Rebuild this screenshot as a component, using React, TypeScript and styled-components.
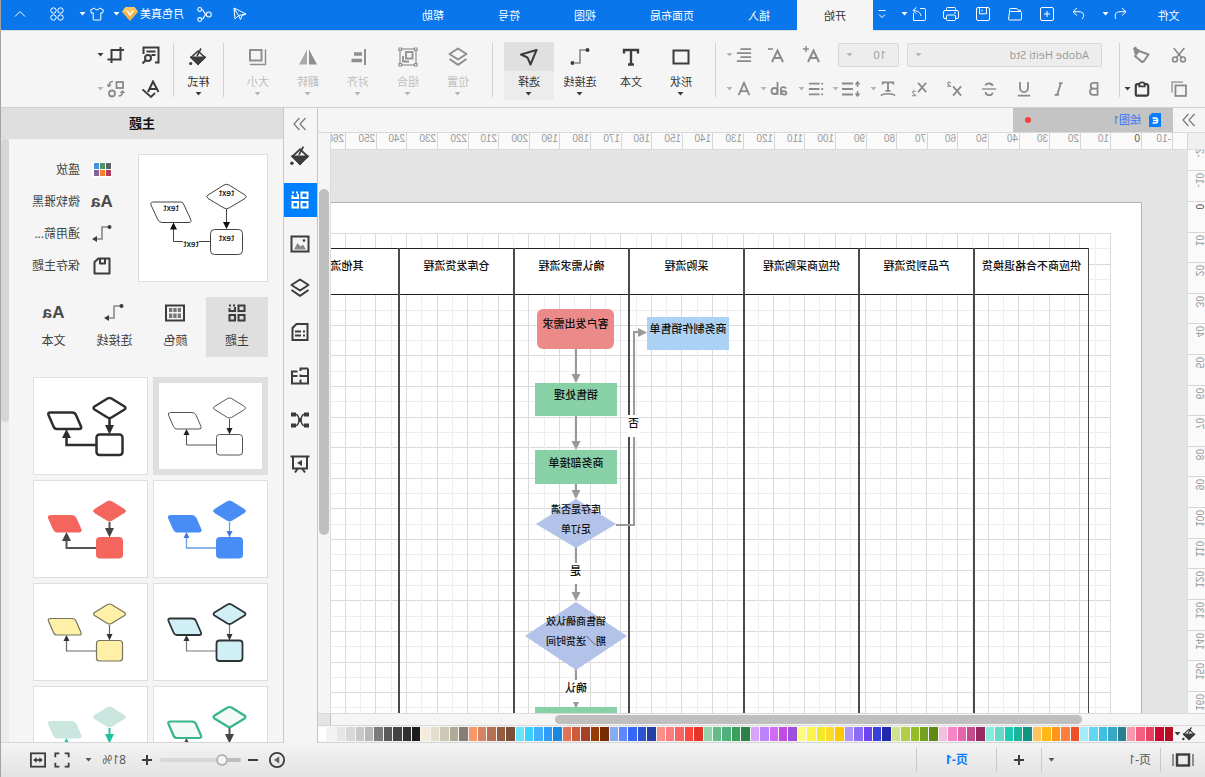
import React from "react";
import styled, { createGlobalStyle, css } from "styled-components";

const GlobalStyle = createGlobalStyle`
  *, *::before, *::after { box-sizing: border-box; }
  body { margin: 0; background: #f5f5f5; overflow: hidden; }
  button, input, select { font: inherit; color: inherit; margin: 0; }
  svg { display: block; flex: none; }
`;

/* The whole window is shown as seen in a mirror. */
const Window = styled.div`
  display: flex;
  flex-direction: column;
  height: 100vh;
  border-right: 1px solid #a4a4a4;
  transform: scaleX(-1);
  font-family: "Open Sans", "Noto Sans CJK SC", sans-serif;
  font-size: 11px;
  line-height: 16px;
  color: #333;
  background: #f5f5f5;
`;

const plainButton = css`
  display: flex;
  align-items: center;
  border: 0;
  padding: 0;
  background: none;
  cursor: pointer;
  white-space: nowrap;
`;

const Spacer = styled.div`
  flex: 1;
`;

/* ---------- icons ---------- */

interface IconProps {
  size?: number;
  box?: number;
  stroke?: number;
  children: React.ReactNode;
}

const Icon = ({ size = 16, box = 18, stroke = 2, children }: IconProps) => (
  <svg
    width={size}
    height={size}
    viewBox={`0 0 ${box} ${box}`}
    fill="none"
    stroke="currentColor"
    strokeWidth={stroke}
    aria-hidden="true"
  >
    {children}
  </svg>
);

const Caret = ({ soft }: { soft?: boolean }) => (
  <svg width="7" height="4" viewBox="0 0 7 4" fill={soft ? "#b4b4b4" : "currentColor"} aria-hidden="true">
    <path d="M0.5 0h6L3.5 3.6z" />
  </svg>
);

const thin = (children: React.ReactNode, size = 14) => (
  <Icon size={size} box={14} stroke={1}>
    {children}
  </Icon>
);

const undoIcon = thin(<path d="M5 1L1 4.7L5 8.5M1 4.7H7C11.5 4.7 13 8 11 12" />);
const redoIcon = thin(<path d="M9 1L13 4.7L9 8.5M13 4.7H7C2 4.7 1 9 4 12" />);
const newIcon = thin(
  <>
    <rect x="0.5" y="0.5" width="13" height="13" rx="1.5" />
    <path d="M7 4v6M4 7h6" />
  </>
);
const openIcon = thin(
  <>
    <path d="M0.5 12V5.5a1 1 0 0 1 1-1h10a1 1 0 0 1 1 1L13.5 12a1 1 0 0 1-1 1H1.5a1 1 0 0 1-1-1z" />
    <path d="M1.5 4.5V3.2h2.4L5.2 1.5h6.3a1 1 0 0 1 1 1V5" />
  </>
);
const saveIcon = thin(
  <>
    <rect x="0.5" y="0.5" width="13" height="13" rx="1.5" />
    <path d="M3.5 0.5v6.3h7V0.5M8 2.5v2" />
  </>
);
const printIcon = (
  <svg width="16" height="14" viewBox="0 0 16 14" fill="none" stroke="currentColor" aria-hidden="true">
    <rect x="3.5" y="0.5" width="9" height="3" rx="1" />
    <rect x="0.5" y="3.5" width="15" height="8" rx="1.5" />
    <rect x="3.5" y="8" width="9" height="5.5" rx="1" fill="#0977eb" />
    <path d="M3 5.8h2" />
  </svg>
);
const exportIcon = thin(<path d="M6 1.5H1.5a1 1 0 0 0-1 1V12.5a1 1 0 0 0 1 1H12.5V6M5 9C5.5 5.5 8 4 12.5 3.5M9.5 0.5L13 3.5L10 6.5" />);
const customizeIcon = thin(<path d="M3.5 3.5h7M4 7.5l3 3l3-3" />);
const sendIcon = thin(<path d="M13 1L12 12L8.5 8.5L1 7L13 1M13 1L8.5 8.5M1 7L5 8.5L6.5 12.5L8.5 8.5" />);
const shareIcon = thin(
  <>
    <circle cx="3" cy="7" r="2.3" />
    <circle cx="11.5" cy="2.3" r="1.8" />
    <circle cx="11.5" cy="11.7" r="1.8" />
    <path d="M5.3 7C8 7 7 2.3 9.7 2.3M5.3 7C8 7 7 11.7 9.7 11.7" />
  </>,
  15
);
const shirtIcon = thin(<path d="M4.5 1L0.5 3L1.5 6.2L3.2 5.8V12.5a0.5 0.5 0 0 0 0.5 0.5H10.3a0.5 0.5 0 0 0 0.5-0.5V5.8L12.5 6.2L13.5 3L9.5 1C9 3.3 5 3.3 4.5 1z" />);
const appsIcon = thin(
  <>
    <circle cx="3.5" cy="3.5" r="2.7" />
    <circle cx="10.5" cy="3.5" r="2.7" />
    <circle cx="3.5" cy="10.5" r="2.7" />
    <circle cx="10.5" cy="10.5" r="2.7" />
  </>
);
const upIcon = thin(<path d="M2 9.5L7 4.5L12 9.5" />);
const vipIcon = (
  <svg width="16" height="14" viewBox="0 0 16 14" aria-hidden="true">
    <path d="M3.5 0h9L16 5L8 14L0 5z" fill="#f3b24a" />
    <path d="M3.5 0h9L16 5H0z" fill="#fbc766" />
    <path d="M5 4l3 4l3-4" fill="none" stroke="#fff" strokeWidth="1.6" />
  </svg>
);

const cutIcon = (
  <Icon stroke={1.8}>
    <circle cx="4.5" cy="14" r="2.7" />
    <circle cx="13.5" cy="14" r="2.7" />
    <path d="M3 1L12 12M15 1L6 12" />
  </Icon>
);
const brushIcon = (
  <Icon size={18}>
    <path d="M1.5 8.5L11 5L15 10L8 16L6 15z" strokeLinejoin="round" />
    <path d="M10 4L13 2.500L14 0.500L17 2L16 5L15.500 8L13 8z" fill="currentColor" stroke="none" />
  </Icon>
);
const copyIcon = (
  <Icon>
    <path d="M4.5 1.2H16.8V13" stroke="#aaa" />
    <rect x="1.2" y="5" width="11.8" height="11.8" />
  </Icon>
);
const pasteIcon = (
  <Icon stroke={2.4}>
    <rect x="2" y="3.5" width="14" height="13" rx="2" />
    <path d="M6 6V4a3 2.5 0 0 1 6 0v2z" fill="#f5f5f5" strokeWidth="2" />
  </Icon>
);
const fontLetter = (mark: React.ReactNode) => (
  <Icon size={18}>
    <path d="M2 16L7.5 4.5L13 16M4 12h7" />
    {mark}
  </Icon>
);
const biggerIcon = fontLetter(<path d="M12 3h6M15 0v6" strokeWidth="1.4" />);
const smallerIcon = fontLetter(<path d="M12 3h5" strokeWidth="1.6" />);
const alignIcon = (
  <Icon>
    <path d="M1 2.5h12M1 7h16M1 11.5h12M1 16h16" />
  </Icon>
);
const boldIcon = <Icon><path d="M5 2h4.5a3 3 0 0 1 0 6.5H5zM5 8.5h5a3.3 3.3 0 0 1 0 7H5z" /></Icon>;
const italicIcon = <Icon><path d="M5 2.5h4M9 15.5h5M7 2.5l4 13" /></Icon>;
const underlineIcon = <Icon><path d="M4.5 1v7a4.5 4.5 0 0 0 9 0V1M2 16.5h14" /></Icon>;
const strikeIcon = (
  <Icon>
    <path d="M1 9h16" strokeWidth="1.5" />
    <path d="M13 5C12 2 5.5 2 5 5.5M13 12.5C12.5 17 5.5 17 5 13" />
  </Icon>
);
const superIcon = (
  <Icon>
    <path d="M1 6l9 10.5M10 6L1 16.5" />
    <path d="M13 2.5C13 0.5 16.5 0.5 16 3L13 6h4" strokeWidth="1.2" />
  </Icon>
);
const subIcon = (
  <Icon>
    <path d="M1 2l9 10.5M10 2L1 12.5" />
    <path d="M13 12.5C13 10.5 16.5 10.5 16 13L13 16.5h4" strokeWidth="1.2" />
  </Icon>
);
const textArtIcon = (
  <Icon>
    <path d="M3 4V1.500h12V4M9 1.500V11M6 11h6" />
    <path d="M1 16.500C3 13.500 15 13.500 17 16.500" strokeWidth="1.6" />
  </Icon>
);
const spacingIcon = (
  <Icon size={18}>
    <path d="M7 3.5h11M7 9h11M7 14.5h11" />
    <path d="M2.5 2v5M2.5 11v5M0.5 4.5l2-2.5l2 2.5M0.5 13.5l2 2.5l2-2.5" strokeWidth="1.5" />
  </Icon>
);
const listIcon = (
  <Icon>
    <path d="M1 3h2M1 9h2M1 15h2M5 3h12M5 9h12M5 15h12" />
  </Icon>
);
const caseIcon = (
  <Icon size={18} stroke={1.800}>
    <path d="M2 8.500C3 6.500 7 6.500 7 9V15M7 11C3 11 1.500 11.500 1.500 13.200S6 15.500 7 12.500" />
    <path d="M10.500 2v13" />
    <circle cx="13.5" cy="11" r="3" />
  </Icon>
);
const colorIcon = <Icon><path d="M3 16L9 2L15 16M5 11.5h8" /></Icon>;

const rectIcon = <Icon size={18}><rect x="1.5" y="2.5" width="15" height="13" /></Icon>;
const textIcon = <Icon size={18} stroke={2.400}><path d="M2 5.500V2h14v3.500M9 2v14M6 16.500h6" /></Icon>;
const connectorIcon = (
  <Icon size={20} box={20}>
    <path d="M4 3h6v13h5" stroke="#888" strokeWidth="1.6" />
    <circle cx="2.5" cy="3" r="2" fill="currentColor" stroke="none" />
    <circle cx="17.5" cy="16" r="2" fill="currentColor" stroke="none" />
  </Icon>
);
const selectIcon = <Icon size={18}><path d="M1.5 2L17 6.5L10.5 9.5L7.5 16.5z" strokeLinejoin="round" /></Icon>;
const layersIcon = (
  <Icon size={20} box={20}>
    <path d="M10 1.5L18.5 7L10 12.5L1.5 7z" strokeLinejoin="round" />
    <path d="M1.5 12L10 17.8L18.5 12" strokeLinejoin="round" />
  </Icon>
);
const groupIcon = (
  <Icon size={20} box={20} stroke={1.2}>
    <rect x="2" y="2" width="16" height="16" />
    <path d="M1 1h2.5v2.5H1zM16.5 1H19v2.5h-2.5zM1 16.5h2.5V19H1zM16.5 16.5H19V19h-2.5z" fill="#f5f5f5" />
    <rect x="5.5" y="5" width="6.5" height="6.5" strokeWidth="1.8" />
    <path d="M9 14.5h6V9" strokeWidth="1.8" />
  </Icon>
);
const alignObjIcon = (
  <Icon size={18}>
    <path d="M2 1v16" />
    <path d="M5 6h8M5 12.5h10.5" strokeWidth="3.6" />
  </Icon>
);
const flipIcon = (
  <Icon size={18}>
    <path d="M8 1.5V16.5H0z" fill="currentColor" stroke="none" />
    <path d="M10 1.5V16.5H18z" fill="#aaa" stroke="none" />
  </Icon>
);
const sizeIcon = (
  <Icon size={18}>
    <rect x="5.5" y="2" width="11.5" height="10.5" />
    <path d="M1.5 1.5V16.5H17" strokeWidth="1.5" />
  </Icon>
);
const bucketIcon = (size = 18) => (
  <Icon size={size}>
    <path d="M9 3L16 9.5L9 16L2 9.5z" strokeWidth="1.6" />
    <path d="M3 9.5h12L9 16z" fill="currentColor" />
    <path d="M10 8L6 0.5" strokeWidth="1.6" />
    <circle cx="16.3" cy="15.5" r="1.6" fill="currentColor" stroke="none" />
  </Icon>
);
const findIcon = (
  <Icon size={18}>
    <path d="M5 16.5H1.5V1.5H16.5V8M4.5 5.5h9M4.5 9h4" />
    <circle cx="12" cy="12" r="3" />
    <path d="M14 14l3.5 3.5" />
  </Icon>
);
const cropIcon = (
  <Icon size={18}>
    <path d="M1 4H13.5V14M4.500 4V13.500H17.500M4.500 1V4M13.500 14V17" />
  </Icon>
);
const spellIcon = (
  <Icon size={18}>
    <path d="M1.5 12L7 1.5L12 12M3.5 9h7" />
    <path d="M5 13l4 4L17.5 9.5" strokeWidth="1.8" />
  </Icon>
);
const swapIcon = (
  <Icon size={18} stroke={1.8}>
    <rect x="2" y="2" width="6.5" height="6" />
    <circle cx="13" cy="13.5" r="3" />
    <path d="M12 1.5c3 0 4 1.5 4 4M14 4.5l2 2l2-2M6.5 16c-3 0-4-1.5-4-4M0.5 13l2-2l2 2" strokeWidth="1.4" />
  </Icon>
);
const themeIcon = (
  <Icon size={20} box={20} stroke={2}>
    <rect x="2.5" y="2.5" width="6" height="5.5" />
    <path d="M12 4V8H17.5V5M12 2.5h2M16 2.5h2" />
    <rect x="2.5" y="12" width="6" height="5.5" />
    <rect x="12" y="12" width="5.5" height="5.5" />
  </Icon>
);
const imageIcon = (
  <Icon size={20} box={20}>
    <rect x="1.5" y="2.5" width="17" height="15" />
    <path d="M4 15.5L7 10.5L9.5 12.5L12.5 9L16 15.5z" fill="#888" stroke="none" />
    <circle cx="6" cy="6.5" r="1.3" fill="currentColor" stroke="none" />
  </Icon>
);
const docIcon = (
  <Icon size={20} box={20}>
    <path d="M2.5 2H13.5L17.5 6V18H2.5z" />
    <path d="M5 9.5h2M9 9.500h6M5 13.500h2M9 13.500h6" />
  </Icon>
);
const planIcon = (
  <Icon size={20} box={20}>
    <path d="M2 2.5H9.5V5M9.5 8.5V10H2M2 2.5V17.5H18V5.5H12.5M12.5 10H18M9.5 17V13.5" />
  </Icon>
);
const networkIcon = (
  <Icon size={20} box={20} stroke={1.5}>
    <path d="M1 2.5h5v4H1zM14 2.5h5v4h-5zM1 13.5h5v4H1zM14 13.5h5v4h-5z" fill="currentColor" stroke="none" />
    <path d="M6 4.5C9 4.5 8 9 10 10S11 15.5 14 15.5M14 4.5C11 4.5 12 9 10 10S9 15.5 6 15.5" />
    <circle cx="10" cy="10" r="2" fill="currentColor" stroke="none" />
  </Icon>
);
const presentIcon = (
  <Icon size={20} box={20}>
    <path d="M0.5 2.5h19M3 3v11.5h14V3M7.5 15l-2.5 3.5M12.5 15l2.5 3.5" />
    <path d="M8 6l5 3l-5 3z" fill="currentColor" stroke="none" />
  </Icon>
);
const tableIcon = (
  <Icon size={20} box={20}>
    <rect x="1" y="2.5" width="18" height="15" />
    <path d="M4 5h3.3v4H4zM8.4 5h3.3v4H8.4zM12.7 5H16v4h-3.3zM4 10.5h3.3v4.5H4zM8.4 10.5h3.3v4.5H8.4zM12.7 10.5H16v4.5h-3.3z" fill="#777" stroke="none" />
  </Icon>
);
const arrowConnectorIcon = (
  <Icon size={20} box={20}>
    <path d="M4 3h6v12h5" stroke="#888" strokeWidth="1.6" />
    <circle cx="2.5" cy="3" r="2" fill="currentColor" stroke="none" />
    <path d="M15 12l5 3l-5 3z" fill="currentColor" stroke="none" />
  </Icon>
);
const diskIcon = (
  <Icon size={18}>
    <path d="M1.5 1.5H12.5L16.5 5V16.5H1.5zM6 2v4.5h5V2" strokeLinejoin="round" />
  </Icon>
);
const swatchIcon = (
  <svg width="20" height="16" viewBox="0 0 20 16" aria-hidden="true">
    <rect width="20" height="16" fill="#fff" />
    {["#5b6064", "#4f9560", "#4a90e2", "#b63a5c", "#f4802e", "#84629a"].map((fill, i) => (
      <rect key={fill} x={1 + (i % 3) * 6} y={1 + Math.floor(i / 3) * 7} width="5" height="6" fill={fill} />
    ))}
  </svg>
);
const chevronsIcon = <Icon size={14} box={14} stroke={1.2}><path d="M1.5 1L7 7L1.5 13M7.5 1L13 7L7.5 13" /></Icon>;

/* ---------- title bar ---------- */

const TitleBar = styled.header`
  display: flex;
  flex: none;
  height: 31px;
  border-bottom: 1px solid #ddd;
  background: #0977eb;
  color: #fff;
`;

const TitleButton = styled.button<{ $width: number; $start?: number; $gap?: number }>`
  ${plainButton}
  width: ${(p) => p.$width}px;
  height: 28px;
  gap: ${(p) => p.$gap ?? 4}px;
  justify-content: ${(p) => (p.$start === undefined ? "center" : "flex-start")};
  padding-left: ${(p) => p.$start ?? 0}px;
`;

const MenuTab = styled.button<{ $width?: number; $active?: boolean }>`
  ${plainButton}
  justify-content: center;
  width: ${(p) => p.$width ?? 76}px;
  height: 31px;
  background: ${(p) => (p.$active ? "#f5f5f5" : "none")};
  color: ${(p) => (p.$active ? "#333" : "#fff")};
`;

const TitleArea = () => (
  <TitleBar>
    <MenuTab $width={73}>文件</MenuTab>
    <TitleButton $width={37} $start={5} aria-label="撤销">{undoIcon}<Caret /></TitleButton>
    <TitleButton $width={32} aria-label="恢复">{redoIcon}</TitleButton>
    <TitleButton $width={32} aria-label="新建">{newIcon}</TitleButton>
    <TitleButton $width={32} aria-label="打开">{openIcon}</TitleButton>
    <TitleButton $width={32} aria-label="保存">{saveIcon}</TitleButton>
    <TitleButton $width={32} aria-label="打印">{printIcon}</TitleButton>
    <TitleButton $width={38} $start={9} aria-label="导出">{exportIcon}<Caret /></TitleButton>
    <TitleButton $width={24} $start={8} aria-label="自定义">{customizeIcon}</TitleButton>
    <MenuTab $active>开始</MenuTab>
    <MenuTab>插入</MenuTab>
    <MenuTab $width={98}>页面布局</MenuTab>
    <MenuTab>视图</MenuTab>
    <MenuTab>符号</MenuTab>
    <MenuTab>帮助</MenuTab>
    <Spacer />
    <TitleButton $width={30} aria-label="发送">{sendIcon}</TitleButton>
    <TitleButton $width={40} aria-label="分享">{shareIcon}</TitleButton>
    <TitleButton $width={78} $start={1} $gap={2}>月色真美{vipIcon}<Caret /></TitleButton>
    <TitleButton $width={32} $start={3} aria-label="皮肤">{shirtIcon}<Caret /></TitleButton>
    <TitleButton $width={36} aria-label="应用">{appsIcon}</TitleButton>
    <TitleButton $width={38} aria-label="收起功能区">{upIcon}</TitleButton>
  </TitleBar>
);

/* ---------- ribbon ---------- */

const Ribbon = styled.div`
  display: flex;
  flex: none;
  height: 77px;
  border-bottom: 1px solid #d0d0d0;
  background: #f5f5f5;
`;

const RibbonGroup = styled.div<{ $start: number; $end?: number }>`
  display: flex;
  padding: 11px ${(p) => p.$end ?? 0}px 0 ${(p) => p.$start}px;
`;

const Divider = styled.div`
  flex: none;
  width: 1px;
  height: 54px;
  margin-top: 12px;
  background: #d2d2d2;
`;

const Rows = styled.div<{ $start: number; $end: number }>`
  display: flex;
  flex-direction: column;
  padding: 7px ${(p) => p.$end}px 0 ${(p) => p.$start}px;
`;

const ToolRow = styled.div<{ $indent?: number; $gap?: number }>`
  display: flex;
  align-items: center;
  height: 34px;
  gap: ${(p) => p.$gap ?? 0}px;
  padding-left: ${(p) => p.$indent ?? 0}px;
`;

const ToolButton = styled.button<{ $width: number; $dark?: boolean; $split?: boolean }>`
  ${plainButton}
  justify-content: ${(p) => (p.$split ? "flex-start" : "center")};
  width: ${(p) => p.$width}px;
  height: 26px;
  gap: 3px;
  color: ${(p) => (p.$dark ? "#3c3c3c" : "#8a8a8a")};
`;

const FormatSplit = styled(ToolButton)`
  padding-left: 6px;
`;

const SelectBox = styled.label<{ $width: number }>`
  display: flex;
  align-items: center;
  width: ${(p) => p.$width}px;
  height: 24px;
  margin-right: 8px;
  padding: 0 7px 0 12px;
  border: 1px solid #d8d8d8;
  border-radius: 2px;
  background: #ededed;
  color: #999;
`;

const BareSelect = styled.select`
  flex: 1;
  min-width: 0;
  border: 0;
  padding: 0;
  appearance: none;
  background: none;
  outline: none;
`;

const BigTool = styled.button<{ $width?: number; $active?: boolean; $off?: boolean }>`
  ${plainButton}
  flex-direction: column;
  width: ${(p) => p.$width ?? 50}px;
  height: 58px;
  border-radius: 2px;
  overflow: hidden;
  background: ${(p) => (p.$active ? "#ececec" : "none")};
  color: ${(p) => (p.$off ? "#8f8f8f" : "#3c3c3c")};
`;

const BigIcon = styled.span<{ $active?: boolean }>`
  display: flex;
  align-items: center;
  align-self: stretch;
  justify-content: center;
  height: 29px;
  background: ${(p) => (p.$active ? "#e0e0e0" : "none")};
`;

const BigLabel = styled.span<{ $off?: boolean }>`
  margin-top: 3px;
  margin-bottom: 2px;
  color: ${(p) => (p.$off ? "#bdbdbd" : "#333")};
`;

interface BigProps {
  icon: React.ReactNode;
  label: string;
  caret?: boolean;
  active?: boolean;
  off?: boolean;
  width?: number;
}

const Big = ({ icon, label, caret = true, active, off, width }: BigProps) => (
  <BigTool $active={active} $off={off} $width={width}>
    <BigIcon $active={active}>{icon}</BigIcon>
    <BigLabel $off={off}>{label}</BigLabel>
    {caret && <Caret soft={off} />}
  </BigTool>
);

const RibbonArea = () => (
  <Ribbon>
    <Rows $start={13} $end={0}>
      <ToolRow $gap={16}>
        <ToolButton $width={26} aria-label="剪切">{cutIcon}</ToolButton>
        <ToolButton $width={30} $split aria-label="格式刷">{brushIcon}</ToolButton>
      </ToolRow>
      <ToolRow $gap={16}>
        <ToolButton $width={26} aria-label="复制">{copyIcon}</ToolButton>
        <ToolButton $width={30} $split $dark aria-label="粘贴">{pasteIcon}<Caret /></ToolButton>
      </ToolRow>
    </Rows>
    <Divider />
    <Rows $start={7} $end={6}>
      <ToolRow $indent={10}>
        <SelectBox $width={195}>
          <BareSelect aria-label="字体"><option>Adobe Heiti Std</option></BareSelect>
          <Caret soft />
        </SelectBox>
        <SelectBox $width={61}>
          <BareSelect aria-label="字号"><option>10</option></BareSelect>
          <Caret soft />
        </SelectBox>
        <ToolButton $width={36} aria-label="增大字号">{biggerIcon}</ToolButton>
        <ToolButton $width={36} aria-label="减小字号">{smallerIcon}</ToolButton>
        <FormatSplit $width={36} $split aria-label="对齐方式">{alignIcon}<Caret soft /></FormatSplit>
      </ToolRow>
      <ToolRow>
        <ToolButton $width={35} aria-label="加粗">{boldIcon}</ToolButton>
        <ToolButton $width={35} aria-label="斜体">{italicIcon}</ToolButton>
        <ToolButton $width={35} aria-label="下划线">{underlineIcon}</ToolButton>
        <ToolButton $width={35} aria-label="删除线">{strikeIcon}</ToolButton>
        <ToolButton $width={35} aria-label="上标">{superIcon}</ToolButton>
        <ToolButton $width={35} aria-label="下标">{subIcon}</ToolButton>
        <FormatSplit $width={36} $split aria-label="文字效果">{textArtIcon}<Caret soft /></FormatSplit>
        <FormatSplit $width={36} $split aria-label="行距">{spacingIcon}<Caret soft /></FormatSplit>
        <FormatSplit $width={36} $split aria-label="项目符号">{listIcon}<Caret soft /></FormatSplit>
        <FormatSplit $width={36} $split aria-label="大小写">{caseIcon}<Caret soft /></FormatSplit>
        <FormatSplit $width={36} $split aria-label="字体颜色">{colorIcon}<Caret soft /></FormatSplit>
      </ToolRow>
    </Rows>
    <Divider />
    <RibbonGroup $start={9} $end={11}>
      <Big icon={rectIcon} label="形状" />
      <Big icon={textIcon} label="文本" caret={false} />
      <Big icon={connectorIcon} label="连接线" width={52} />
      <Big icon={selectIcon} label="选择" active />
    </RibbonGroup>
    <Divider />
    <RibbonGroup $start={9} $end={9}>
      <Big icon={layersIcon} label="位置" off />
      <Big icon={groupIcon} label="组合" off />
      <Big icon={alignObjIcon} label="对齐" off />
      <Big icon={flipIcon} label="翻转" off />
      <Big icon={sizeIcon} label="大小" off />
    </RibbonGroup>
    <Divider />
    <RibbonGroup $start={0}>
      <Big icon={bucketIcon()} label="样式" width={49} />
    </RibbonGroup>
    <Divider />
    <Rows $start={10} $end={0}>
      <ToolRow $gap={14}>
        <ToolButton $width={24} $dark aria-label="查找">{findIcon}</ToolButton>
        <ToolButton $width={36} $split $dark aria-label="裁剪">{cropIcon}<Caret /></ToolButton>
      </ToolRow>
      <ToolRow $gap={14}>
        <ToolButton $width={24} $dark aria-label="拼写检查">{spellIcon}</ToolButton>
        <ToolButton $width={36} $split aria-label="替换形状">{swapIcon}<Caret soft /></ToolButton>
      </ToolRow>
    </Rows>
  </Ribbon>
);

/* ---------- editor: tabs, rulers, canvas ---------- */

const Main = styled.div`
  display: flex;
  flex: 1;
  min-height: 0;
`;

const Editor = styled.main`
  display: flex;
  flex: 1;
  flex-direction: column;
  min-width: 0;
  border-right: 1px solid #c6c6c6;
`;

const DocTabs = styled.div`
  display: flex;
  flex: none;
  height: 25px;
  border-bottom: 1px solid #dadada;
`;

const Collapse = styled.button<{ $width: number; $height: number }>`
  ${plainButton}
  flex: none;
  justify-content: center;
  width: ${(p) => p.$width}px;
  height: ${(p) => p.$height}px;
  color: #777;
`;

const DocTab = styled.button`
  ${plainButton}
  width: 160px;
  padding: 0 12px;
  gap: 8px;
  background: #c4c4c4;
  color: #2f74f5;
`;

const Unsaved = styled.span`
  width: 6px;
  height: 6px;
  margin-left: auto;
  border-radius: 50%;
  background: #ff3b3b;
`;

const EditorRow = styled.div`
  display: flex;
  flex: 1;
  min-height: 0;
`;

const Sheet = styled.div`
  display: grid;
  flex: 1;
  min-width: 0;
  grid-template-columns: 17px 1fr;
  grid-template-rows: 17px 1fr;
  overflow: hidden;
`;

const Corner = styled.div`
  border-bottom: 1px solid #dcdcdc;
  background: #f0f0f0;
`;

const TopRuler = styled.div`
  display: flex;
  overflow: hidden;
  border-bottom: 1px solid #dcdcdc;
  background: #fafafa;
`;

const SideRuler = styled.div`
  display: flex;
  flex-direction: column;
  overflow: hidden;
  background: #fafafa;
`;

const TopTick = styled.span<{ $size: number; $zero?: boolean }>`
  flex: none;
  width: ${(p) => p.$size}px;
  padding-left: 1px;
  border-left: 1px solid #d6d6d6;
  font-family: "Liberation Sans", sans-serif;
  font-size: 10px;
  line-height: 12px;
  color: ${(p) => (p.$zero ? "#555" : "#999")};
`;

const SideTick = styled.span<{ $size: number; $zero?: boolean }>`
  display: flex;
  flex: none;
  align-items: flex-start;
  height: ${(p) => p.$size}px;
  padding-top: 2px;
  border-top: 1px solid #d6d6d6;
  font-family: "Liberation Sans", sans-serif;
  font-size: 10px;
  line-height: 12px;
  color: ${(p) => (p.$zero ? "#555" : "#999")};

  &:first-child { margin-top: -10px; }
`;

const Turned = styled.span`
  writing-mode: vertical-rl;
  transform: rotate(180deg);
`;

/* Distance on screen between two labelled ruler marks. */
const STEP = 30.61;
const at = (index: number) => Math.round(index * STEP);

const Canvas = styled.div`
  position: relative;
  overflow: hidden;
  border-left: 1px solid #dcdcdc;
  background: #e4e4e4;
`;

const Page = styled.div`
  width: 1200px;
  height: 900px;
  margin: 52px 0 0 45px;
  padding: 30px 0 0 30px;
  border: 1px solid #b4b4b4;
  background: #fff;
`;

const Board = styled.div`
  position: relative;
  width: 1100px;
  height: 800px;
`;

const Grid = () => (
  <svg width="1100" height="800" shapeRendering="crispEdges" aria-hidden="true">
    {Array.from({ length: 52 }, (_, i) => (
      <rect key={`r${i}`} x="0" y={at(i / 2)} width="1100" height="1" fill={i % 2 ? "#eee" : "#dadada"} />
    ))}
    {Array.from({ length: 71 }, (_, i) => (
      <rect key={`c${i}`} x={at(i / 2)} y="0" width="1" height="800" fill={i % 2 ? "#eee" : "#dadada"} />
    ))}
  </svg>
);

const Lanes = styled.div`
  position: absolute;
  left: 22px;
  top: 15px;
  display: flex;
  height: 785px;
`;

const Lane = styled.section`
  width: 115px;
  border: solid #4a4a4a;
  border-width: 0 1px;
`;

const LaneTitle = styled.h3`
  height: 47px;
  margin: 0;
  padding-top: 9px;
  border: solid #222;
  border-width: 1px 0;
  background: #fff;
  font-size: 11px;
  font-weight: 500;
  line-height: 16px;
  text-align: center;
  color: #111;
  white-space: nowrap;
`;

const Flow = styled.div`
  position: absolute;
  inset: 1px 0 0 0;
`;

const Links = styled.svg`
  position: absolute;
  left: 0;
  top: 0;
`;

const Node = styled.div<{ $x: number; $y: number; $w: number; $h: number; $fill?: string; $round?: number; $top: number; $small?: boolean }>`
  position: absolute;
  left: ${(p) => p.$x}px;
  top: ${(p) => p.$y}px;
  width: ${(p) => p.$w}px;
  height: ${(p) => p.$h}px;
  padding-top: ${(p) => p.$top}px;
  border-radius: ${(p) => p.$round ?? 0}px;
  background: ${(p) => p.$fill ?? "none"};
  font-size: ${(p) => (p.$small ? 10 : 11)}px;
  font-weight: 500;
  line-height: ${(p) => (p.$small ? 20 : 16)}px;
  text-align: center;
  white-space: nowrap;
  color: #111;
`;

const lanes = ["供应商不合格退换货", "产品到货流程", "供应商采购流程", "采购流程", "确认需求流程", "仓库发货流程", "其他流程"];

const downHead = (x: number, y: number) => `M${x - 4.5} ${y - 9}h9l-4.5 9z`;

const Diagram = () => (
  <Board>
    <Grid />
    <Lanes>
      {lanes.map((name) => (
        <Lane key={name}><LaneTitle>{name}</LaneTitle></Lane>
      ))}
    </Lanes>
    <Flow>
      <Links width="700" height="560" aria-hidden="true">
        <g fill="none" stroke="#999" strokeWidth="2">
          <path d="M535 115v30M535 182v30M535 250v10M535 313v50M535 435v38" />
          <path d="M495 291H477V98H470" />
        </g>
        <g fill="#999">
          <path d={downHead(535, 149)} />
          <path d={downHead(535, 216)} />
          <path d={downHead(535, 265)} />
          <path d={downHead(535, 367)} />
          <path d={downHead(535, 474)} />
          <path d="M473 94v9l-9-4.5z" />
        </g>
        <g fill="#b2c2e8">
          <path d="M535 265l40 25l-40 24l-40-24z" />
          <path d="M535 368l51 34l-51 34l-51-34z" />
        </g>
      </Links>
      <Node $x={497} $y={75} $w={77} $h={40} $fill="#ec8a89" $round={6} $top={7}>客户发出需求</Node>
      <Node $x={382} $y={83} $w={82} $h={33} $fill="#abd2f5" $top={4}>商务制作销售单</Node>
      <Node $x={494} $y={149} $w={82} $h={33} $fill="#88d0a6" $top={4}>销售处理</Node>
      <Node $x={494} $y={216} $w={82} $h={34} $fill="#88d0a6" $top={5}>商务部接单</Node>
      <Node $x={494} $y={265} $w={82} $h={49} $top={0} $small>库存是否满<br />足订单</Node>
      <Node $x={530} $y={329} $w={11} $h={21} $fill="#fff" $top={0}>是</Node>
      <Node $x={484} $y={367} $w={102} $h={68} $top={10} $small>销售商确认效<br />期／送货时间</Node>
      <Node $x={524} $y={446} $w={22} $h={22} $fill="#fff" $top={0}>确认</Node>
      <Node $x={472} $y={181} $w={11} $h={22} $fill="#fff" $top={0}>否</Node>
      <Node $x={494} $y={473} $w={82} $h={33} $fill="#88d0a6" $top={4} />
    </Flow>
  </Board>
);

const ScrollV = styled.div`
  flex: none;
  width: 13px;
  padding: 56px 1px 0;
  border-left: 1px solid #dcdcdc;
  background: #f5f5f5;
`;

const ScrollVThumb = styled.div`
  height: 66%;
  border-radius: 5px;
  background: #bfbfbf;
`;

const ScrollH = styled.div`
  display: flex;
  flex: none;
  height: 13px;
  padding: 1px 0 2px 123px;
  border: solid #dadada;
  border-width: 1px 0;
  background: #f5f5f5;
`;

const ScrollHThumb = styled.div`
  width: 69%;
  height: 9px;
  border-radius: 5px;
  background: #bfbfbf;
`;

const ScrollCorner = styled.div`
  width: 13px;
  height: 11px;
  margin: -1px 0 -2px auto;
  border-left: 1px solid #c0c0c0;
  background: #e4e4e4;
`;

const Palette = styled.div`
  display: flex;
  flex: none;
  align-items: center;
  height: 17px;
  padding-left: 9px;
  border-bottom: 1px solid #d6d6d6;
  background: #f5f5f5;
`;

const FillButton = styled.button`
  ${plainButton}
  width: 23px;
  gap: 1px;
  color: #3c3c3c;
`;

const Swatches = styled.div`
  display: flex;
  flex: 1;
  gap: 1px;
  height: 14px;
`;

const Swatch = styled.button<{ $color: string }>`
  flex: 1;
  min-width: 0;
  padding: 0;
  border: 0;
  background: ${(p) => p.$color};
`;

const colors = (
  "b01020 cc0830 e84060 f56080 f89aae 2a8090 38a8c4 40c0e0 60d8f0 a4ecfc f05028 ff7f3a ff951c ffb818 ffc460 " +
  "149480 18b49c 1ccab0 68d8c8 84ecdc 982860 c44c8c e466a8 f884c8 f0c0dc 5e8a14 76a024 98bc28 b0ce48 d2e090 " +
  "2028b0 3840d8 6c44f0 8c6cf4 ac94f8 fcc800 fcdc28 f0e828 faf44c fdfc80 9c50e0 c04ce4 d06cf4 bc84fc d8a4fc " +
  "2c8048 38a058 50b07c 64bc88 90d4ac e4342c fc463c f86464 fc7c80 fc9088 2440a4 2c54d0 3468f4 6088fc 88acf4 " +
  "762c04 963c04 a84026 cc5c3c e07458 1a88dc 2e9cf8 44b0fc 3cd0fc 68e4fc 7a5038 965c40 b47050 d48460 f89868 " +
  "887c74 b0aa98 ccc8b6 e4dccc f4ecd8 1c1c1c 303030 444444 5a5a5a 7c7c7c b8b8b8 c8c8c8 d8d8d8 e6e6e6 f2f2f2 ffffff"
).split(" ");

const docMark = (
  <svg width="12" height="14" viewBox="0 0 12 14" aria-hidden="true">
    <path d="M0 0h9l3 3v11H0z" fill="#0a7cff" />
    <path d="M8.5 5H5.5a2 2.3 0 0 0 0 5H8.5M4 7.5h4" fill="none" stroke="#fff" strokeWidth="1.4" />
  </svg>
);

const EditorArea = () => (
  <Editor>
    <DocTabs>
      <Collapse $width={32} $height={24} aria-label="展开符号库">{chevronsIcon}</Collapse>
      <DocTab>{docMark}绘图1<Unsaved /></DocTab>
    </DocTabs>
    <EditorRow>
      <Sheet>
        <Corner />
        <TopRuler>
          <TopTick $size={15} />
          {Array.from({ length: 28 }, (_, i) => (
            <TopTick key={i} $size={at(i) - at(i - 1)} $zero={i === 1}>{(i - 1) * 10}</TopTick>
          ))}
        </TopRuler>
        <SideRuler>
          {Array.from({ length: 19 }, (_, i) => (
            <SideTick key={i} $size={at(i - 1) - at(i - 2)} $zero={i === 2}><Turned>{(i - 2) * 10}</Turned></SideTick>
          ))}
        </SideRuler>
        <Canvas><Page><Diagram /></Page></Canvas>
      </Sheet>
      <ScrollV><ScrollVThumb /></ScrollV>
    </EditorRow>
    <ScrollH><ScrollHThumb /><ScrollCorner /></ScrollH>
    <Palette>
      <FillButton aria-label="填充颜色">{bucketIcon(14)}<Caret /></FillButton>
      <Swatches>
        {colors.map((c) => <Swatch key={c} $color={`#${c}`} aria-label={`#${c}`} />)}
      </Swatches>
    </Palette>
  </Editor>
);

/* ---------- side tools and theme panel ---------- */

const SideTools = styled.nav`
  display: flex;
  flex: none;
  flex-direction: column;
  width: 34px;
  border-right: 1px solid #c8c8c8;
  background: #f5f5f5;
`;

const SideTool = styled.button<{ $active?: boolean }>`
  ${plainButton}
  flex: none;
  justify-content: center;
  height: 34px;
  margin-bottom: 10px;
  background: ${(p) => (p.$active ? "#0080ff" : "none")};
  color: ${(p) => (p.$active ? "#fff" : "#3c3c3c")};
`;

const Panel = styled.aside`
  display: flex;
  flex: none;
  flex-direction: column;
  width: 282px;
  border-bottom: 1px solid #d6d6d6;
`;

const PanelTitle = styled.h2`
  flex: none;
  height: 31px;
  margin: 0;
  background: #dfdfdf;
  font-size: 13px;
  line-height: 31px;
  text-align: center;
  color: #111;
`;

const PanelBody = styled.div`
  display: flex;
  flex: 1;
  min-height: 0;
  font-size: 12px;
`;

const PanelContent = styled.div`
  flex: 1;
  min-width: 0;
  padding: 15px 0 0 15px;
  overflow: hidden;
`;

const PanelTrack = styled.div`
  width: 8px;
  background: #ececec;
`;

const PanelThumb = styled.div`
  height: 47%;
  border-radius: 4px;
  background: #d6d6d6;
`;

const PreviewRow = styled.div`
  display: flex;
`;

const Preview = styled.div`
  flex: none;
  width: 130px;
  height: 128px;
  border: 1px solid #dedede;
  background: #fff;
`;

const OptionList = styled.div`
  display: flex;
  flex-direction: column;
  padding-left: 26px;
`;

const Option = styled.button`
  ${plainButton}
  height: 32px;
  gap: 12px;
  color: #444;
`;

const OptionIcon = styled.span`
  display: flex;
  justify-content: center;
  width: 20px;
  color: #3c3c3c;
`;

const Aa = styled.span`
  font-family: "Liberation Sans", sans-serif;
  font-size: 17px;
  font-weight: 700;
  line-height: 20px;
  color: #4a4a4a;
`;

const PanelTabs = styled.div`
  display: flex;
  margin-top: 15px;
`;

const PanelTab = styled.button<{ $active?: boolean }>`
  ${plainButton}
  flex-direction: column;
  width: ${(p) => (p.$active ? 62 : 61)}px;
  height: 60px;
  padding-top: 6px;
  gap: 10px;
  background: ${(p) => (p.$active ? "#dfdfdf" : "none")};
  color: #3c3c3c;
`;

const Cards = styled.div`
  display: grid;
  grid-template-columns: 115px 115px;
  gap: 5px;
  margin-top: 20px;
`;

const Card = styled.button<{ $active?: boolean }>`
  height: 98px;
  padding: 0;
  border: 1px solid #dedede;
  background: #fff;
  box-shadow: ${(p) => (p.$active ? "inset 0 0 0 5px #dfdfdf" : "none")};
`;

interface Theme {
  name: string;
  fill: string;
  edge: string;
  width: number;
  line: string;
  head: string;
  lineWidth: number;
}

const themes: Theme[] = [
  { name: "简约", fill: "#fff", edge: "#555", width: 1, line: "#555", head: "#222", lineWidth: 1 },
  { name: "粗线", fill: "#fff", edge: "#2e2e2e", width: 2.5, line: "#2e2e2e", head: "#2e2e2e", lineWidth: 2.5 },
  { name: "蓝色", fill: "#488df5", edge: "#488df5", width: 1, line: "#6a9fe8", head: "#4479d8", lineWidth: 1.3 },
  { name: "红色", fill: "#f4655e", edge: "#f4655e", width: 1, line: "#555", head: "#444", lineWidth: 2 },
  { name: "浅青", fill: "#d0f0f5", edge: "#2e3436", width: 1.8, line: "#777", head: "#333", lineWidth: 1.2 },
  { name: "浅黄", fill: "#fff0a8", edge: "#77745f", width: 1.2, line: "#666", head: "#333", lineWidth: 1.2 },
  { name: "绿边", fill: "#f2f9f7", edge: "#36b58e", width: 2.2, line: "#555", head: "#444", lineWidth: 2 },
  { name: "薄荷", fill: "#cbe6df", edge: "#cbe6df", width: 1, line: "#2ec0a4", head: "#1fbf9f", lineWidth: 2 },
];

const ThemeArt = ({ theme: t }: { theme: Theme }) => {
  const big = t.lineWidth > 1.5 ? 4.5 : 3;
  return (
    <svg width="113" height="96" viewBox="1 1 113 96" aria-hidden="true">
      <g fill="none" stroke={t.line} strokeWidth={t.lineWidth}>
        <path d="M38.5 42V54M52 68H81.5V57" />
      </g>
      <g fill={t.head}>
        <path d={`M${38.5 - big} ${57 - big * 2}h${big * 2}L38.5 57.5z`} />
        <path d={`M${81.5 - big} ${52 + big * 2}h${big * 2}L81.5 52z`} />
      </g>
      <g fill={t.fill} stroke={t.edge} strokeWidth={t.width} strokeLinejoin="round">
        <path d="M36.5 21.5Q38.5 20.5 40.5 21.5L53.5 29.5Q55.5 31 53.5 32.5L40.5 40.5Q38.5 41.5 36.5 40.5L23.5 32.5Q21.5 31 23.5 29.5z" />
        <rect x="25.5" y="57.5" width="26" height="20.5" rx="3" />
        <path d="M76 35.5H97.5Q100.500 35.500 99.500 38L94.5 49.5Q93.5 52 91 52H69Q66 52 67 49.5L72 38Q73 35.5 76 35.5z" />
      </g>
    </svg>
  );
};

const PreviewText = styled.text`
  font-size: 8px;
  font-weight: 600;
  text-anchor: middle;
  fill: #222;
`;

const PreviewArt = () => (
  <svg width="128" height="126" viewBox="1 1 128 126" role="img" aria-label="主题预览">
    <g fill="#fff" stroke="#444">
      <path d="M41.5 55V74M58 87.5H94.5V70" />
      <path d="M39 31Q41.5 29.5 44 31L60 41Q62.5 42.5 60 44.5L44 54Q41.5 55.5 39 54L23 44.5Q20.5 42.5 23 41z" />
      <rect x="25.5" y="75.5" width="32" height="25" rx="4" />
      <path d="M87 48H114Q118 48 117 51L110.5 65Q109 68.5 106 68.5H79Q76 68.5 77.5 65L84 51Q85 48 87 48z" />
    </g>
    <path d="M38 68h7l-3.5 7zM91 75.5h7l-3.5-7z" fill="#111" />
    <rect x="69" y="84" width="16" height="8" fill="#fff" />
    <PreviewText x="41.5" y="42">text</PreviewText>
    <PreviewText x="97" y="57">text</PreviewText>
    <PreviewText x="41.5" y="87">text</PreviewText>
    <PreviewText x="77" y="93">text</PreviewText>
  </svg>
);

const PanelArea = () => (
  <Panel>
    <PanelTitle>主题</PanelTitle>
    <PanelBody>
      <PanelContent>
        <PreviewRow>
          <Preview><PreviewArt /></Preview>
          <OptionList>
            <Option><OptionIcon>{swatchIcon}</OptionIcon>盛放</Option>
            <Option><OptionIcon><Aa>Aa</Aa></OptionIcon>微软雅黑</Option>
            <Option><OptionIcon>{arrowConnectorIcon}</OptionIcon>通用箭...</Option>
            <Option><OptionIcon>{diskIcon}</OptionIcon>保存主题</Option>
          </OptionList>
        </PreviewRow>
        <PanelTabs>
          <PanelTab $active>{themeIcon}主题</PanelTab>
          <PanelTab>{tableIcon}颜色</PanelTab>
          <PanelTab>{arrowConnectorIcon}连接线</PanelTab>
          <PanelTab><Aa>Aa</Aa>文本</PanelTab>
        </PanelTabs>
        <Cards>
          {themes.map((t, i) => (
            <Card key={t.name} $active={i === 0} aria-label={t.name}><ThemeArt theme={t} /></Card>
          ))}
        </Cards>
      </PanelContent>
      <PanelTrack><PanelThumb /></PanelTrack>
    </PanelBody>
  </Panel>
);

/* ---------- status bar ---------- */

const StatusBar = styled.footer`
  display: flex;
  flex: none;
  align-items: center;
  height: 34px;
  padding-right: 25px;
  background: linear-gradient(#f3f3f3, #e3e3e3);
  color: #3c3c3c;
`;

const StatusButton = styled.button<{ $width: number }>`
  ${plainButton}
  justify-content: center;
  width: ${(p) => p.$width}px;
  height: 34px;
`;

const PageTab = styled(StatusButton)`
  font-size: 12px;
  font-weight: 700;
  color: #0a7cff;
`;

const StatusDivider = styled.div`
  width: 1px;
  height: 24px;
  background: #c8c8c8;
`;

const PageSelect = styled.label<{ $width: number; $start: number; $end: number }>`
  display: flex;
  align-items: center;
  width: ${(p) => p.$width}px;
  padding: 0 ${(p) => p.$end}px 0 ${(p) => p.$start}px;
  color: #555;
  font-size: 12px;
`;

const Zoom = styled.input`
  width: 82px;
  height: 12px;
  appearance: none;
  background: none;
  outline: none;

  &::-webkit-slider-runnable-track {
    height: 4px;
    border-radius: 2px;
    background: linear-gradient(90deg, #bdbdbd 24%, #d8d8d8 24%);
  }

  &::-webkit-slider-thumb {
    appearance: none;
    width: 12px;
    height: 12px;
    margin-top: -4px;
    border: 2px solid #b4b4b4;
    border-radius: 50%;
    background: #f5f5f5;
  }
`;

const plusIcon = <Icon size={12} box={12} stroke={2}><path d="M1 6h10M6 1v10" /></Icon>;
const minusIcon = <Icon size={12} box={12} stroke={2}><path d="M1 6h10" /></Icon>;

const StatusArea = () => (
  <StatusBar>
    <StatusButton $width={44} aria-label="页面视图">
      <svg width="22" height="14" viewBox="0 0 22 14" fill="none" stroke="currentColor" strokeWidth="2.4" aria-hidden="true">
        <rect x="5" y="1.5" width="12" height="11" />
        <path d="M1 1v12M21 1v12" stroke="#777" strokeWidth="1.6" />
      </svg>
    </StatusButton>
    <StatusDivider />
    <PageSelect $width={118} $start={9} $end={6}>
      <BareSelect aria-label="页面"><option>页-1</option></BareSelect>
      <Caret />
    </PageSelect>
    <StatusDivider />
    <StatusButton $width={44} aria-label="添加页面">{plusIcon}</StatusButton>
    <StatusDivider />
    <PageTab $width={79}>页-1</PageTab>
    <StatusDivider />
    <Spacer />
    <StatusButton $width={24} aria-label="放映">
      <Icon><circle cx="9" cy="9" r="8" /><path d="M6.5 5l6 4l-6 4z" fill="#666" stroke="none" /></Icon>
    </StatusButton>
    <StatusButton $width={24} aria-label="缩小">{minusIcon}</StatusButton>
    <Zoom type="range" min={0} max={100} defaultValue={18} aria-label="缩放" />
    <StatusButton $width={24} aria-label="放大">{plusIcon}</StatusButton>
    <PageSelect $width={61} $start={9} $end={11}>
      <BareSelect aria-label="缩放比例"><option>81%</option></BareSelect>
      <Caret />
    </PageSelect>
    <StatusButton $width={24} aria-label="全屏">
      <Icon><path d="M1.5 6V1.5H6M12 1.5H16.5V6M16.5 12V16.5H12M6 16.5H1.5V12" /></Icon>
    </StatusButton>
    <StatusButton $width={24} aria-label="适合宽度">
      <Icon><rect x="1" y="1.5" width="16" height="15" /><path d="M5 9h8" /><path d="M3.5 9l4-3.2v6.4zM14.5 9l-4-3.2v6.4z" fill="currentColor" stroke="none" /></Icon>
    </StatusButton>
  </StatusBar>
);

export default function App() {
  return (
    <>
      <GlobalStyle />
      <Window>
        <TitleArea />
        <RibbonArea />
        <Main>
          <EditorArea />
          <SideTools>
            <Collapse $width={33} $height={31} aria-label="收起面板">{chevronsIcon}</Collapse>
            <SideTool aria-label="样式">{bucketIcon(20)}</SideTool>
            <SideTool $active aria-label="主题">{themeIcon}</SideTool>
            <SideTool aria-label="图片">{imageIcon}</SideTool>
            <SideTool aria-label="图层">{layersIcon}</SideTool>
            <SideTool aria-label="注释">{docIcon}</SideTool>
            <SideTool aria-label="平面图">{planIcon}</SideTool>
            <SideTool aria-label="导图">{networkIcon}</SideTool>
            <SideTool aria-label="演示">{presentIcon}</SideTool>
          </SideTools>
          <PanelArea />
        </Main>
        <StatusArea />
      </Window>
    </>
  );
}
